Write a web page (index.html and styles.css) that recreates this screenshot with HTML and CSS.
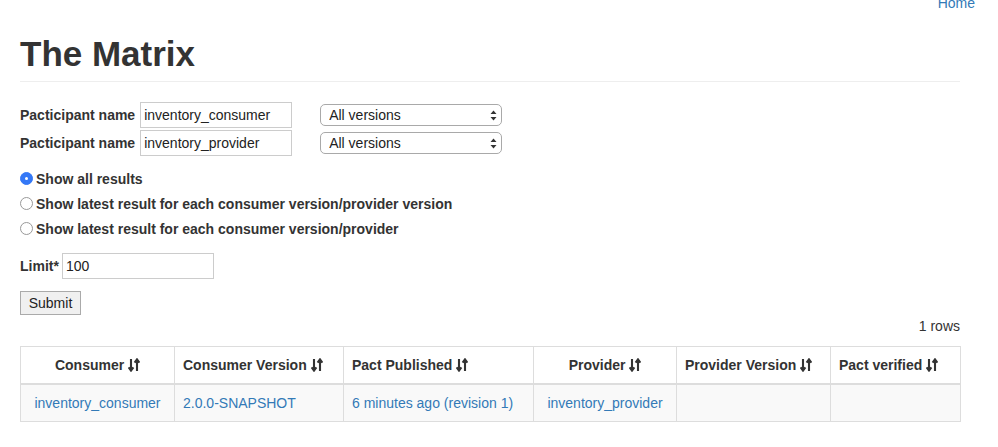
FILE: index.html
```html
<!DOCTYPE html>
<html>
<head>
<meta charset="utf-8">
<title>The Matrix</title>
<link rel="stylesheet" href="styles.css">
</head>
<body>
<div class="topbar"><a href="#" class="link">Home</a></div>
<div class="container">
  <div class="page-header"><h1>The Matrix</h1></div>
  <form class="form">
    <div class="prow">
      <label class="blabel">Pacticipant name</label>
      <input class="tinput" type="text" value="inventory_consumer">
      <span class="selwrap">
        <select class="sel"><option>All versions</option></select>
        <svg class="selarrow" width="7" height="11" viewBox="0 0 7 11"><path d="M3.5 0.5 L6.5 4 L0.5 4 Z M3.5 10.5 L6.5 7 L0.5 7 Z" fill="#333"/></svg>
      </span>
    </div>
    <div class="prow">
      <label class="blabel">Pacticipant name</label>
      <input class="tinput" type="text" value="inventory_provider">
      <span class="selwrap">
        <select class="sel"><option>All versions</option></select>
        <svg class="selarrow" width="7" height="11" viewBox="0 0 7 11"><path d="M3.5 0.5 L6.5 4 L0.5 4 Z M3.5 10.5 L6.5 7 L0.5 7 Z" fill="#333"/></svg>
      </span>
    </div>
    <div class="radios">
      <label class="rrow"><span class="radio checked"></span><span class="rtext">Show all results</span></label>
      <label class="rrow"><span class="radio"></span><span class="rtext">Show latest result for each consumer version/provider version</span></label>
      <label class="rrow"><span class="radio"></span><span class="rtext">Show latest result for each consumer version/provider</span></label>
    </div>
    <div class="lrow">
      <label class="blabel">Limit*</label>
      <input class="tinput" type="text" value="100">
    </div>
    <div class="brow"><button type="button" class="btn">Submit</button></div>
  </form>
  <div class="count">1 rows</div>
  <table class="matrix">
    <colgroup>
      <col style="width:154px"><col style="width:169px"><col style="width:190px"><col style="width:143px"><col style="width:154px"><col style="width:130px">
    </colgroup>
    <thead>
      <tr>
        <th class="center">Consumer <svg class="sort" width="12" height="14" viewBox="0 0 12 14"><path d="M3 1 V12 M0.6 9.4 L3 12.6 L5.4 9.4 M9 13 V2 M6.6 4.6 L9 1.4 L11.4 4.6" stroke="#333" stroke-width="2.1" fill="none"/></svg></th>
        <th>Consumer Version <svg class="sort" width="12" height="14" viewBox="0 0 12 14"><path d="M3 1 V12 M0.6 9.4 L3 12.6 L5.4 9.4 M9 13 V2 M6.6 4.6 L9 1.4 L11.4 4.6" stroke="#333" stroke-width="2.1" fill="none"/></svg></th>
        <th>Pact Published <svg class="sort" width="12" height="14" viewBox="0 0 12 14"><path d="M3 1 V12 M0.6 9.4 L3 12.6 L5.4 9.4 M9 13 V2 M6.6 4.6 L9 1.4 L11.4 4.6" stroke="#333" stroke-width="2.1" fill="none"/></svg></th>
        <th class="center">Provider <svg class="sort" width="12" height="14" viewBox="0 0 12 14"><path d="M3 1 V12 M0.6 9.4 L3 12.6 L5.4 9.4 M9 13 V2 M6.6 4.6 L9 1.4 L11.4 4.6" stroke="#333" stroke-width="2.1" fill="none"/></svg></th>
        <th>Provider Version <svg class="sort" width="12" height="14" viewBox="0 0 12 14"><path d="M3 1 V12 M0.6 9.4 L3 12.6 L5.4 9.4 M9 13 V2 M6.6 4.6 L9 1.4 L11.4 4.6" stroke="#333" stroke-width="2.1" fill="none"/></svg></th>
        <th>Pact verified <svg class="sort" width="12" height="14" viewBox="0 0 12 14"><path d="M3 1 V12 M0.6 9.4 L3 12.6 L5.4 9.4 M9 13 V2 M6.6 4.6 L9 1.4 L11.4 4.6" stroke="#333" stroke-width="2.1" fill="none"/></svg></th>
      </tr>
    </thead>
    <tbody>
      <tr>
        <td class="center"><a href="#" class="link">inventory_consumer</a></td>
        <td><a href="#" class="link">2.0.0-SNAPSHOT</a></td>
        <td><a href="#" class="link">6 minutes ago (revision 1)</a></td>
        <td class="center"><a href="#" class="link">inventory_provider</a></td>
        <td></td>
        <td></td>
      </tr>
    </tbody>
  </table>
</div>
</body>
</html>
```
FILE: styles.css
```css
html, body {
  margin: 0;
  padding: 0;
  background: #fff;
}
body {
  font-family: "Liberation Sans", Arial, sans-serif;
  font-size: 14px;
  line-height: 20px;
  color: #333;
  overflow: hidden;
}
.link {
  color: #337ab7;
  text-decoration: none;
}
.topbar {
  margin-top: -7px;
  height: 20px;
  text-align: right;
  padding-right: 23px;
}
.container {
  width: 940px;
  padding-left: 20px;
}
.page-header {
  margin-top: 21px;
  padding-bottom: 7px;
  border-bottom: 1px solid #eee;
}
h1 {
  margin: 0;
  font-size: 35px;
  line-height: 40px;
  font-weight: bold;
  color: #333;
}
.form {
  margin: 20px 0 0;
}
.prow, .lrow {
  display: flex;
  align-items: center;
  height: 26px;
  margin-bottom: 2px;
}
.blabel {
  font-weight: bold;
  color: #333;
  margin-right: 5px;
}
.lrow .blabel {
  margin-right: 3px;
}
.tinput {
  box-sizing: border-box;
  width: 152px;
  height: 26px;
  border: 1px solid #ccc;
  padding: 0 3px;
  margin: 0;
  font-family: "Liberation Sans", Arial, sans-serif;
  font-size: 14px;
  color: #222;
  background: #fff;
  outline: none;
}
.selwrap {
  position: relative;
  margin-left: 28px;
  display: inline-block;
  height: 22px;
}
.sel {
  -webkit-appearance: none;
  appearance: none;
  box-sizing: border-box;
  width: 182px;
  height: 22px;
  border: 1px solid #a9a9a9;
  border-radius: 5px;
  background: #fff;
  padding: 0 0 0 8px;
  margin: 0;
  font-family: "Liberation Sans", Arial, sans-serif;
  font-size: 14px;
  color: #222;
  outline: none;
}
.selarrow {
  position: absolute;
  right: 5px;
  top: 6px;
}
.radios {
  margin-top: 10px;
}
.rrow {
  display: flex;
  align-items: center;
  height: 25px;
  font-weight: bold;
  color: #333;
}
.radio {
  box-sizing: border-box;
  width: 13px;
  height: 13px;
  border-radius: 50%;
  border: 1px solid #999;
  background: #fff;
  margin-right: 3px;
  position: relative;
}
.radio.checked {
  background: #3478f6;
  border-color: #3478f6;
}
.radio.checked::after {
  content: "";
  position: absolute;
  left: 4px;
  top: 4px;
  width: 3px;
  height: 3px;
  border-radius: 50%;
  background: #fff;
}
.lrow {
  margin-top: 12px;
}
.brow {
  display: flex;
  margin-top: 12px;
}
.btn {
  box-sizing: border-box;
  height: 24px;
  width: 61px;
  border: 1px solid #aaa;
  background: #f0f0f0;
  font-family: "Liberation Sans", Arial, sans-serif;
  font-size: 14px;
  color: #222;
  padding: 0;
  margin: 0;
}
.count {
  text-align: right;
  margin-top: 1px;
  line-height: 20px;
}
.matrix {
  margin-top: 10px;
  width: 940px;
  border-collapse: collapse;
  table-layout: fixed;
  border: 1px solid #ddd;
}
.matrix th, .matrix td {
  border: 1px solid #ddd;
  padding: 8px 8px;
  line-height: 20px;
  text-align: left;
  vertical-align: middle;
  white-space: nowrap;
}
.matrix th {
  font-weight: bold;
  color: #333;
  border-bottom: 2px solid #ddd;
  background: #fff;
}
.matrix td {
  background: #f9f9f9;
}
.matrix .center {
  text-align: center;
}
.sort {
  vertical-align: -2px;
}
```
